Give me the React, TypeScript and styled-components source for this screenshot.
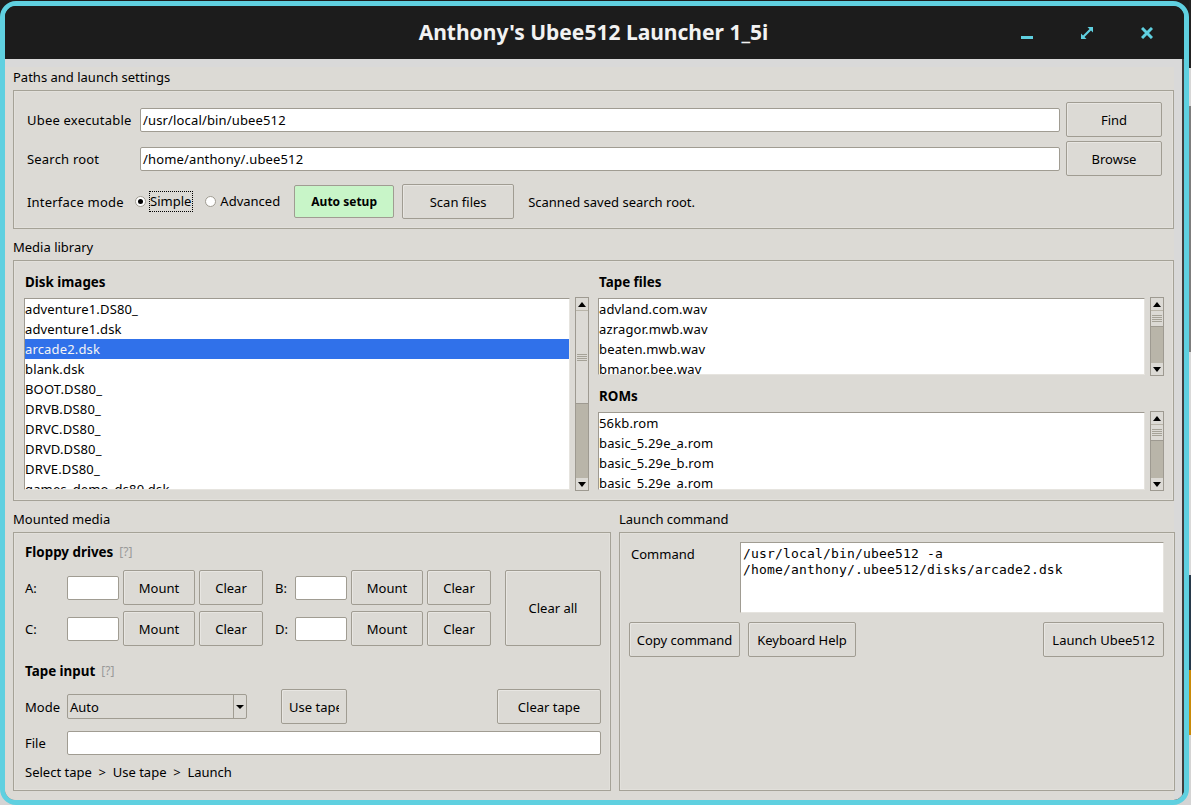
import React from 'react';
import styled, { createGlobalStyle } from 'styled-components';

const GlobalStyle = createGlobalStyle`
  html, body {
    margin: 0;
    padding: 0;
    width: 1191px;
    height: 805px;
    overflow: hidden;
  }
  * {
    box-sizing: border-box;
  }
`;

const Desktop = styled.div`
  display: flex;
  align-items: flex-start;
  width: 1191px;
  height: 805px;
  background: linear-gradient(#1e1e1e 0 60px, #d4d4d4 60px);
  font-family: 'Noto Sans', sans-serif;
  font-size: 13px;
  color: #000;
`;

const Window = styled.div`
  width: 1189px;
  height: 804px;
  margin-top: 1px;
  flex-shrink: 0;
  display: flex;
  flex-direction: column;
  border: 5px solid #5fd0e0;
  border-radius: 16px;
  overflow: hidden;
  background: #1c1c1c;
`;

const DesktopEdge = styled.div`
  width: 2px;
  height: 805px;
  display: flex;
  flex-direction: column;
`;

const EdgeBand = styled.div<{ $h: number; $c: string }>`
  height: ${(p) => p.$h}px;
  background: ${(p) => p.$c};
`;

/* title bar */
const TitleBar = styled.div`
  height: 53px;
  flex-shrink: 0;
  display: grid;
  grid-template-columns: 1fr auto 1fr;
  align-items: center;
  background: #1c1c1c;
  padding-right: 7px;
`;

const Title = styled.div`
  grid-column: 2;
  margin: 0 0 2px 5px;
  font-size: 21px;
  font-weight: 700;
  color: #f2f2f2;
  white-space: nowrap;
`;

const Controls = styled.div`
  display: flex;
  justify-content: flex-end;
  grid-column: 3;
`;

const ControlButton = styled.div`
  width: 60px;
  height: 53px;
  display: flex;
  align-items: center;
  justify-content: center;
  color: #5fd0e0;
`;

/* window body */
const Body = styled.div`
  flex: 1;
  padding-top: 8px;
  background: #d9d9d9;
  border-right: 2px solid #3f3f3f;
  border-bottom: 3px solid #3f3f3f;
  border-bottom-right-radius: 10px;
  border-bottom-left-radius: 10px;
`;

const Content = styled.div`
  margin-right: 8px;
  padding-left: 8px;
  padding-bottom: 6px;
  background: #dcdad5;
  display: flex;
  flex-direction: column;
`;

const Section = styled.section`
  margin-bottom: 8px;
  display: flex;
  flex-direction: column;
`;

const SectionLabel = styled.div`
  height: 20px;
  line-height: 20px;
  margin-bottom: 3px;
`;

const Frame = styled.div`
  border: 1px solid #a5a297;
  box-shadow: inset 0 0 0 1px #e2e0db;
`;

const SettingsFrame = styled(Frame)`
  height: 139px;
  padding: 11px 11px 0 13px;
  display: flex;
  flex-direction: column;
  gap: 4px;
`;

const PathRow = styled.div`
  height: 35px;
  display: flex;
  align-items: center;
`;

const FieldLabel = styled.div<{ $w: number }>`
  width: ${(p) => p.$w}px;
  flex-shrink: 0;
  white-space: nowrap;
`;

const SettingsLabel = styled(FieldLabel)`
  letter-spacing: 0.2px;
`;

const TextField = styled.div<{ $w?: number }>`
  height: 24px;
  ${(p) => (p.$w ? `width: ${p.$w}px;` : 'flex: 1;')}
  padding: 0 2px;
  line-height: 22px;
  letter-spacing: 0.15px;
  background: #fff;
  border: 1px solid #a09c92;
  border-radius: 2px;
  white-space: nowrap;
`;

const Button = styled.div<{ $w?: number; $h?: number }>`
  ${(p) => (p.$w ? `width: ${p.$w}px;` : '')}
  height: ${(p) => p.$h ?? 35}px;
  flex-shrink: 0;
  display: flex;
  align-items: center;
  justify-content: center;
  background: #dcdad5;
  border: 1px solid #a09c92;
  border-radius: 2px;
  box-shadow: inset 1px 1px 0 #e8e6e2;
  white-space: nowrap;
`;

const PathButton = styled(Button)`
  margin-left: 6px;
`;

const AutoSetupButton = styled(Button)`
  background: #c8f5c8;
  font-size: 12px;
  font-weight: 700;
  box-shadow: none;
`;

const ScanButton = styled(Button)`
  margin-left: 8px;
`;

const ClippedLabel = styled.span`
  display: block;
  width: 50px;
  overflow: hidden;
`;

const ModeRow = styled.div`
  margin-top: 4px;
  height: 35px;
  display: flex;
  align-items: center;
`;

const RadioDot = styled.span<{ $on?: boolean }>`
  width: 11px;
  height: 11px;
  flex-shrink: 0;
  border-radius: 50%;
  background: #fff;
  border: 1px solid #a09c92;
  display: flex;
  align-items: center;
  justify-content: center;
  &::after {
    content: '';
    width: 5px;
    height: 5px;
    border-radius: 50%;
    background: ${(p) => (p.$on ? '#000' : 'transparent')};
  }
`;

const RadioText = styled.span<{ $focus?: boolean }>`
  margin-left: 3px;
  padding-right: 1px;
  height: 21px;
  line-height: 19px;
  border: 1px dotted ${(p) => (p.$focus ? '#000' : 'transparent')};
`;

const Radio = styled.div<{ $mr: number }>`
  display: flex;
  align-items: center;
  margin-right: ${(p) => p.$mr}px;
`;

const StatusText = styled.div`
  margin-left: 14px;
  white-space: nowrap;
`;

/* media library */
const LibraryFrame = styled(Frame)`
  height: 241px;
  padding: 11px 9px 0 10px;
  display: grid;
  grid-template-columns: 565px 566px;
  column-gap: 9px;
`;

const Column = styled.div`
  display: flex;
  flex-direction: column;
`;

const Heading = styled.div<{ $mt?: number; $flush?: boolean }>`
  height: 20px;
  line-height: 20px;
  margin-top: ${(p) => p.$mt ?? 0}px;
  font-size: 13.4px;
  font-weight: 700;
  padding-left: ${(p) => (p.$flush ? 0 : 1)}px;
  white-space: nowrap;
  display: flex;
  align-items: center;
`;

const Help = styled.span`
  margin-left: 6px;
  font-size: 12px;
  font-weight: 400;
  color: #999;
`;

const ListPane = styled.div<{ $h: number }>`
  margin-top: 5px;
  height: ${(p) => p.$h}px;
  display: flex;
  align-items: stretch;
  justify-content: space-between;
`;

const ListBox = styled.div`
  flex: 1;
  margin: 1px 5px 1px 0;
  background: #fff;
  border-top: 1px solid #9e9a91;
  border-left: 1px solid #9e9a91;
  border-right: 1px solid #e6e4df;
  border-bottom: 1px solid #e6e4df;
  overflow: hidden;
`;

const ListRow = styled.div<{ $selected?: boolean }>`
  height: 20px;
  line-height: 20px;
  letter-spacing: 0.15px;
  white-space: nowrap;
  background: ${(p) => (p.$selected ? '#3071ea' : 'transparent')};
  color: ${(p) => (p.$selected ? '#f4f4f4' : '#000')};
`;

const ScrollBar = styled.div`
  width: 14px;
  flex-shrink: 0;
  display: flex;
  flex-direction: column;
  background: #b9b5a9;
  border: 1px solid #9e9a91;
`;

const ScrollArrow = styled.div<{ $down?: boolean }>`
  height: 12px;
  flex-shrink: 0;
  background: #dcdad5;
  display: flex;
  align-items: center;
  justify-content: center;
  &::after {
    content: '';
    border-left: 4px solid transparent;
    border-right: 4px solid transparent;
    ${(p) => (p.$down ? 'border-top: 5px solid #000;' : 'border-bottom: 5px solid #000;')}
  }
`;

const ScrollThumb = styled.div<{ $h: number }>`
  height: ${(p) => p.$h}px;
  margin-top: 1px;
  flex-shrink: 0;
  background: #dcdad5;
  border-bottom: 1px solid #9e9a91;
  display: flex;
  flex-direction: column;
  align-items: center;
  justify-content: center;
  gap: 1px;
`;

const Grip = styled.span`
  width: 10px;
  height: 1px;
  background: #a5a297;
`;

const ScrollTrough = styled.div`
  flex: 1;
`;

/* mounted media and launch command */
const BottomGrid = styled.div`
  display: grid;
  grid-template-columns: 598px 556px;
  column-gap: 8px;
`;

const MountedFrame = styled(Frame)`
  height: 259px;
  padding: 9px 9px 0 11px;
  display: flex;
  flex-direction: column;
`;

const DriveGrid = styled.div`
  margin-top: 8px;
  display: grid;
  grid-template-columns: 38px 52px 72px 64px 24px 52px 72px 64px 106px;
  grid-template-rows: 35px 35px;
  column-gap: 4px;
  row-gap: 6px;
  align-items: center;
`;

const DriveLabel = styled.div<{ $inset?: boolean }>`
  padding-left: ${(p) => (p.$inset ? 8 : 0)}px;
`;

const ClearAll = styled(Button)`
  grid-column: 9;
  grid-row: 1 / span 2;
  height: 76px;
  margin-left: 10px;
`;

const TapeModeRow = styled.div`
  margin-top: 8px;
  height: 35px;
  display: flex;
  align-items: center;
`;

const UseTapeButton = styled(Button)`
  margin-left: 34px;
`;

const ClearTapeButton = styled(Button)`
  margin-left: auto;
`;

const Select = styled.div`
  width: 180px;
  height: 25px;
  display: flex;
  align-items: stretch;
  background: #dcdad5;
  border: 1px solid #a09c92;
  border-radius: 2px;
`;

const SelectValue = styled.div`
  flex: 1;
  padding-left: 2px;
  line-height: 24px;
`;

const SelectArrow = styled.div`
  width: 13px;
  border-left: 1px solid #a09c92;
  display: flex;
  align-items: center;
  justify-content: center;
  &::after {
    content: '';
    border-left: 4px solid transparent;
    border-right: 4px solid transparent;
    border-top: 4px solid #000;
  }
`;

const FileRow = styled.div`
  margin-top: 7px;
  height: 24px;
  display: flex;
  align-items: center;
`;

const Hint = styled.div`
  margin-top: 7px;
  height: 20px;
  line-height: 20px;
  white-space: pre;
`;

const LaunchFrame = styled(Frame)`
  height: 259px;
  padding: 10px 10px 0 11px;
  display: flex;
  flex-direction: column;
`;

const CommandRow = styled.div`
  display: flex;
  align-items: flex-start;
`;

const CommandLabel = styled(FieldLabel)`
  padding-top: 2px;
`;

const CommandBox = styled.div`
  flex: 1;
  height: 71px;
  margin-top: -1px;
  padding: 3px 2px;
  background: #fff;
  border-top: 1px solid #a09c92;
  border-left: 1px solid #a09c92;
  border-right: 1px solid #e6e4df;
  border-bottom: 1px solid #e6e4df;
  font-family: 'DejaVu Sans Mono', monospace;
  font-size: 13px;
  line-height: 16px;
  letter-spacing: 0.17px;
  white-space: pre;
`;

const ActionRow = styled.div`
  margin: 9px 0 0 -2px;
  display: flex;
  gap: 8px;
`;

const LaunchButton = styled(Button)`
  margin-left: auto;
`;

const diskImages = [
  'adventure1.DS80_',
  'adventure1.dsk',
  'arcade2.dsk',
  'blank.dsk',
  'BOOT.DS80_',
  'DRVB.DS80_',
  'DRVC.DS80_',
  'DRVD.DS80_',
  'DRVE.DS80_',
  'games_demo_ds80.dsk',
];
const tapeFiles = ['advland.com.wav', 'azragor.mwb.wav', 'beaten.mwb.wav', 'bmanor.bee.wav'];
const roms = ['56kb.rom', 'basic_5.29e_a.rom', 'basic_5.29e_b.rom', 'basic_5.29e_a.rom'];

const edgeBands = [
  { h: 68, c: '#222222' },
  { h: 38, c: '#d6d6d6' },
  { h: 246, c: '#7d7d7d' },
  { h: 223, c: '#d9d9d9' },
  { h: 95, c: '#27394a' },
  { h: 65, c: '#c98a08' },
  { h: 70, c: '#d4d4d4' },
];

const Scroller: React.FC<{ thumb: number }> = ({ thumb }) => (
  <ScrollBar>
    <ScrollArrow />
    <ScrollThumb $h={thumb}>
      <Grip />
      <Grip />
      <Grip />
      <Grip />
    </ScrollThumb>
    <ScrollTrough />
    <ScrollArrow $down />
  </ScrollBar>
);

const FileList: React.FC<{ items: string[]; selected?: string; height: number; thumb: number }> = ({
  items,
  selected,
  height,
  thumb,
}) => (
  <ListPane $h={height}>
    <ListBox>
      {items.map((item, i) => (
        <ListRow key={i} $selected={item === selected}>
          {item}
        </ListRow>
      ))}
    </ListBox>
    <Scroller thumb={thumb} />
  </ListPane>
);

export default function App() {
  return (
    <Desktop>
      <GlobalStyle />
      <Window>
        <TitleBar>
          <Title>Anthony's Ubee512 Launcher 1_5i</Title>
          <Controls>
            <ControlButton>
              <svg width="12" height="12" viewBox="0 0 12 12">
                <rect x="0" y="9" width="12" height="3" fill="currentColor" />
              </svg>
            </ControlButton>
            <ControlButton>
              <svg width="12" height="12" viewBox="0 0 12 12" fill="currentColor">
                <path d="M6.5 0H12V5.5L10 3.5 3.5 10 5.5 12H0V6.5L2 8.5 8.5 2z" />
              </svg>
            </ControlButton>
            <ControlButton>
              <svg width="12" height="12" viewBox="0 0 12 12">
                <path d="M1 1l10 10M11 1L1 11" stroke="currentColor" strokeWidth="3" />
              </svg>
            </ControlButton>
          </Controls>
        </TitleBar>
        <Body>
          <Content>
            <Section>
              <SectionLabel>Paths and launch settings</SectionLabel>
              <SettingsFrame>
                <PathRow>
                  <SettingsLabel $w={113}>Ubee executable</SettingsLabel>
                  <TextField>/usr/local/bin/ubee512</TextField>
                  <PathButton $w={96}>Find</PathButton>
                </PathRow>
                <PathRow>
                  <SettingsLabel $w={113}>Search root</SettingsLabel>
                  <TextField>/home/anthony/.ubee512</TextField>
                  <PathButton $w={96}>Browse</PathButton>
                </PathRow>
                <ModeRow>
                  <SettingsLabel $w={108}>Interface mode</SettingsLabel>
                  <Radio $mr={12}>
                    <RadioDot $on />
                    <RadioText $focus>Simple</RadioText>
                  </Radio>
                  <Radio $mr={12}>
                    <RadioDot />
                    <RadioText>Advanced</RadioText>
                  </Radio>
                  <AutoSetupButton $w={100} $h={33}>Auto setup</AutoSetupButton>
                  <ScanButton $w={112}>Scan files</ScanButton>
                  <StatusText>Scanned saved search root.</StatusText>
                </ModeRow>
              </SettingsFrame>
            </Section>

            <Section>
              <SectionLabel>Media library</SectionLabel>
              <LibraryFrame>
                <Column>
                  <Heading>Disk images</Heading>
                  <FileList items={diskImages} selected="arcade2.dsk" height={194} thumb={93} />
                </Column>
                <Column>
                  <Heading>Tape files</Heading>
                  <FileList items={tapeFiles} height={79} thumb={16} />
                  <Heading $mt={10}>ROMs</Heading>
                  <FileList items={roms} height={80} thumb={16} />
                </Column>
              </LibraryFrame>
            </Section>

            <BottomGrid>
              <Section>
                <SectionLabel>Mounted media</SectionLabel>
                <MountedFrame>
                  <Heading $flush>
                    Floppy drives<Help>[?]</Help>
                  </Heading>
                  <DriveGrid>
                    <DriveLabel>A:</DriveLabel>
                    <TextField />
                    <Button>Mount</Button>
                    <Button>Clear</Button>
                    <DriveLabel $inset>B:</DriveLabel>
                    <TextField />
                    <Button>Mount</Button>
                    <Button>Clear</Button>
                    <ClearAll>Clear all</ClearAll>
                    <DriveLabel>C:</DriveLabel>
                    <TextField />
                    <Button>Mount</Button>
                    <Button>Clear</Button>
                    <DriveLabel $inset>D:</DriveLabel>
                    <TextField />
                    <Button>Mount</Button>
                    <Button>Clear</Button>
                  </DriveGrid>
                  <Heading $mt={15} $flush>
                    Tape input<Help>[?]</Help>
                  </Heading>
                  <TapeModeRow>
                    <FieldLabel $w={42}>Mode</FieldLabel>
                    <Select>
                      <SelectValue>Auto</SelectValue>
                      <SelectArrow />
                    </Select>
                    <UseTapeButton $w={66}>
                      <ClippedLabel>Use tape</ClippedLabel>
                    </UseTapeButton>
                    <ClearTapeButton $w={104}>Clear tape</ClearTapeButton>
                  </TapeModeRow>
                  <FileRow>
                    <FieldLabel $w={42}>File</FieldLabel>
                    <TextField />
                  </FileRow>
                  <Hint>Select tape  &gt;  Use tape  &gt;  Launch</Hint>
                </MountedFrame>
              </Section>
              <Section>
                <SectionLabel>Launch command</SectionLabel>
                <LaunchFrame>
                  <CommandRow>
                    <CommandLabel $w={109}>Command</CommandLabel>
                    <CommandBox>{'/usr/local/bin/ubee512 -a\n/home/anthony/.ubee512/disks/arcade2.dsk'}</CommandBox>
                  </CommandRow>
                  <ActionRow>
                    <Button $w={111}>Copy command</Button>
                    <Button $w={108}>Keyboard Help</Button>
                    <LaunchButton $w={121}>Launch Ubee512</LaunchButton>
                  </ActionRow>
                </LaunchFrame>
              </Section>
            </BottomGrid>
          </Content>
        </Body>
      </Window>
      <DesktopEdge>
        {edgeBands.map((band) => (
          <EdgeBand key={band.c} $h={band.h} $c={band.c} />
        ))}
      </DesktopEdge>
    </Desktop>
  );
}
